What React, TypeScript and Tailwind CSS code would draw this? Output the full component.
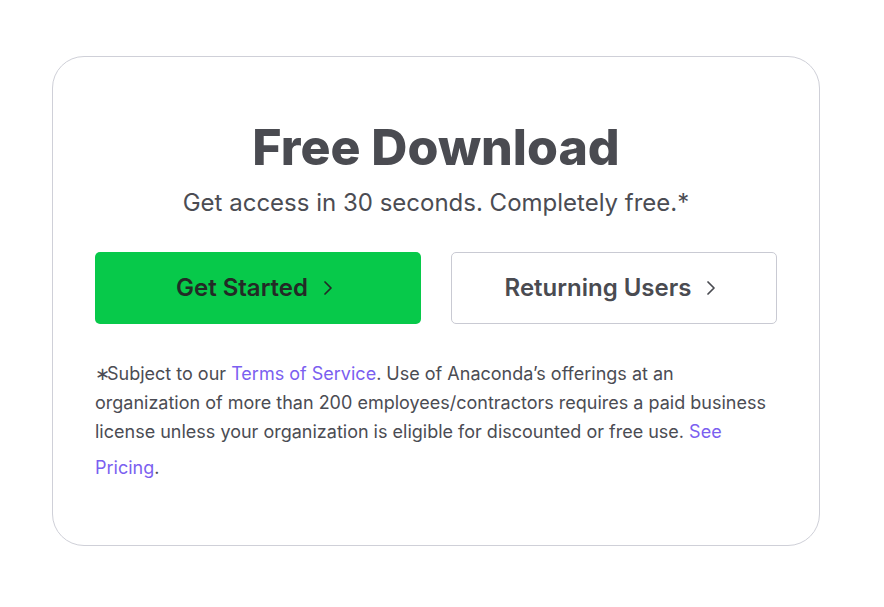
import { ChevronRight } from 'lucide-react'

export default function App() {
  return (
    <div className="min-h-screen bg-white pt-[56px] pl-[52px]" style={{ fontFamily: 'Inter, "Liberation Sans", sans-serif' }}>
      <div className="w-[768px] h-[490px] rounded-[32px] border border-[#cfd0d8] px-[42px] pt-[60px]">
        {/* Heading */}
        <h1 className="text-center text-[50px] leading-[60px] font-extrabold tracking-[0px] text-[#4a4b51]">
          Free Download
        </h1>
        <p className="mt-[10px] text-center text-[24px] leading-[32px] text-[#4b4c53]">
          Get access in 30 seconds. Completely free.*
        </p>

        {/* Buttons */}
        <div className="mt-[33px] grid grid-cols-2 gap-[30px]">
          <button className="h-[72px] rounded-[5px] bg-[#07c94a] text-[#232a26] text-[24px] font-semibold flex items-center justify-center gap-[8px]">
            Get Started
            <ChevronRight className="w-[24px] h-[24px]" strokeWidth={1.75} />
          </button>
          <button className="h-[72px] rounded-[5px] border border-[#c9cad3] bg-white text-[#4a4b51] text-[24px] font-semibold flex items-center justify-center gap-[8px]">
            Returning Users
            <ChevronRight className="w-[24px] h-[24px]" strokeWidth={1.75} />
          </button>
        </div>

        {/* Fine print */}
        <p className="mt-[35px] text-[18px] leading-[29px] text-[#4b4c53]">
          <span className="tracking-[-3px]">∗</span>Subject to our <a className="text-[#7b5ff0]">Terms of Service</a>. Use of Anaconda’s offerings at an
          organization of more than 200 employees/contractors requires a paid business license unless your
          organization is eligible for discounted or free use. <a className="text-[#7b5ff0]">See</a>{' '}
          <a className="inline-block pt-[7px] text-[#7b5ff0]">Pricing</a>.
        </p>
      </div>
    </div>
  )
}
